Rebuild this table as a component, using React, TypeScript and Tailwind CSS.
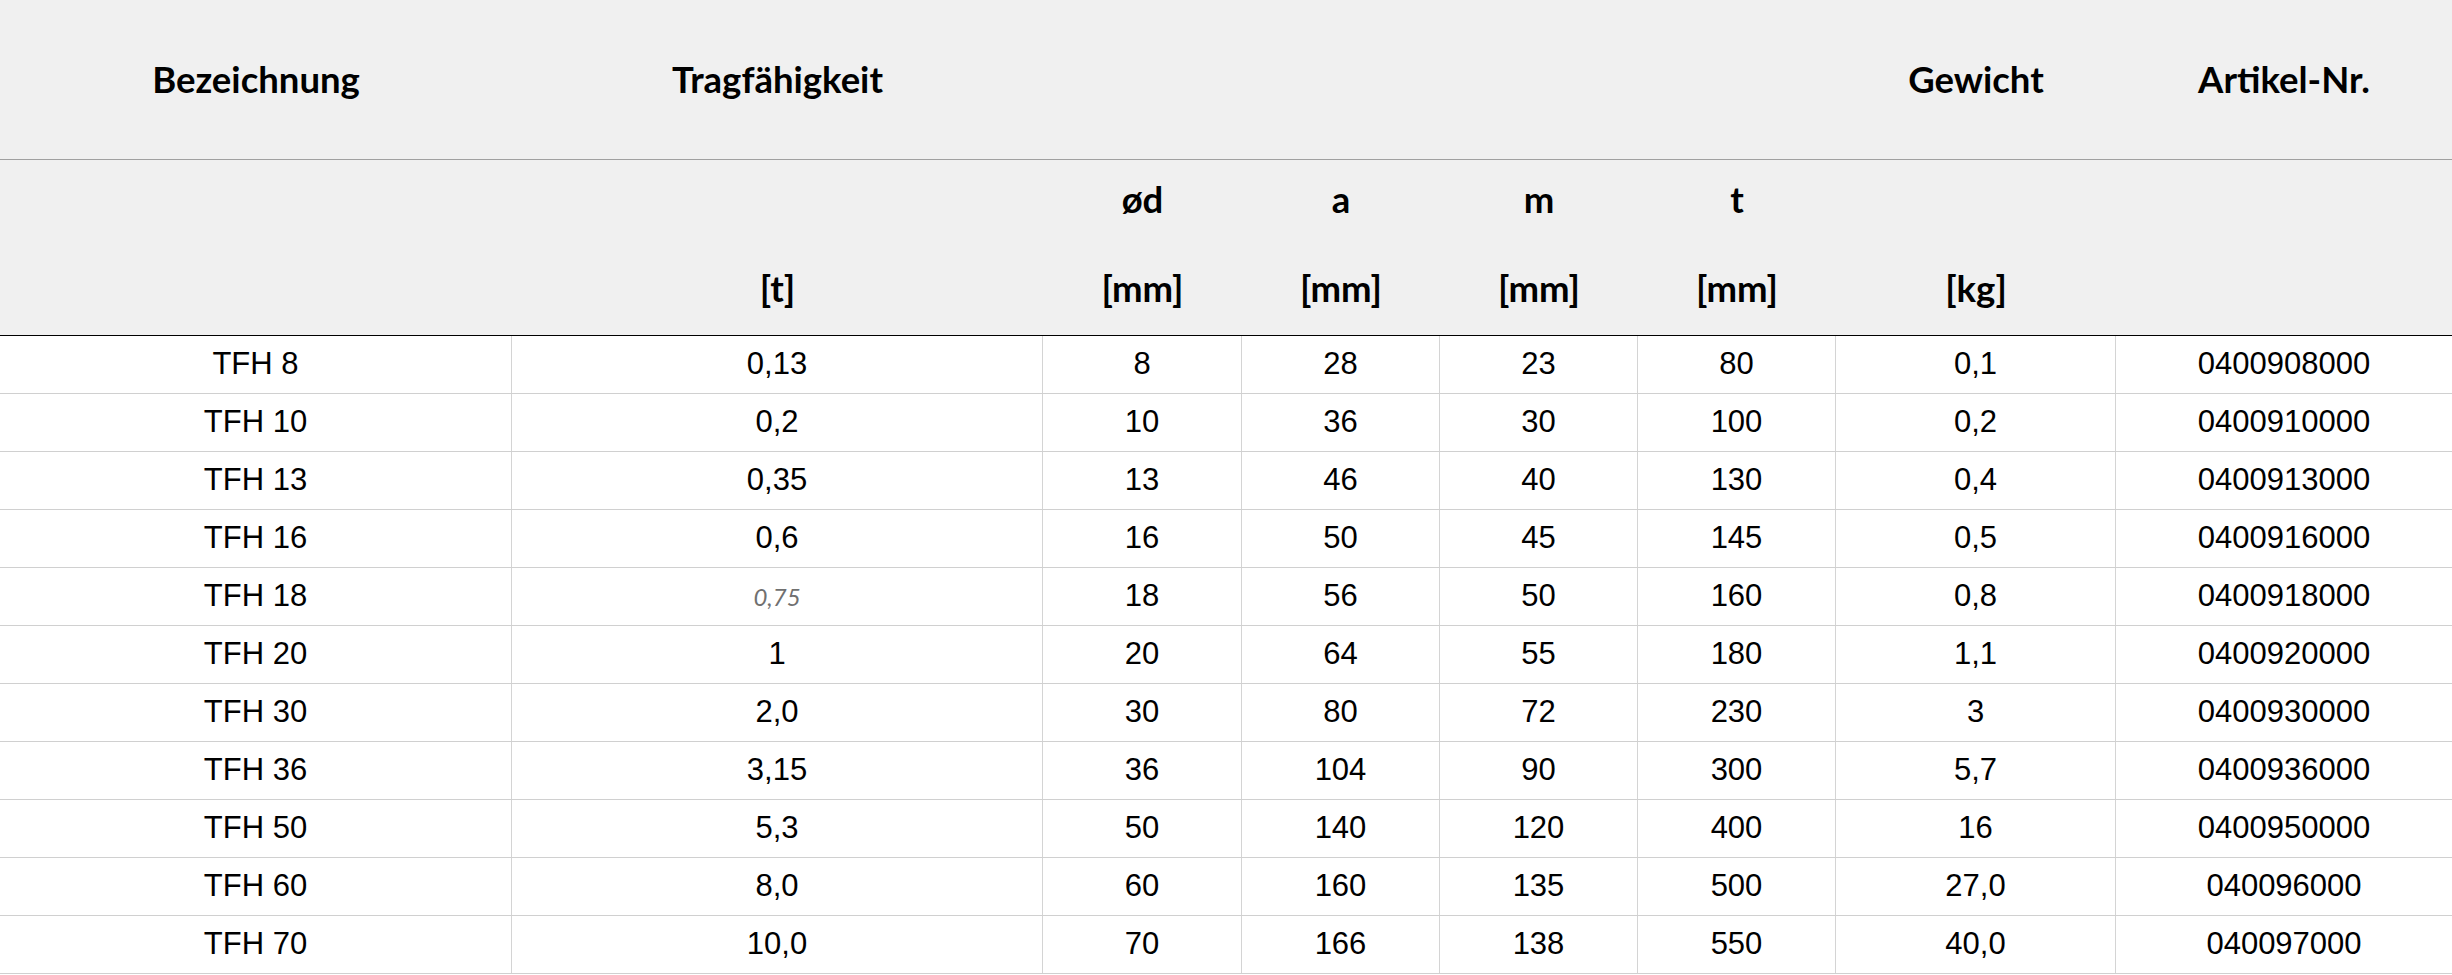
const cols = "grid grid-cols-[512px_531px_199px_198px_198px_198px_280px_336px]";

const rows: { name: string; load: string; d: string; a: string; m: string; t: string; kg: string; art: string; muted?: boolean }[] = [
  { name: "TFH 8", load: "0,13", d: "8", a: "28", m: "23", t: "80", kg: "0,1", art: "0400908000" },
  { name: "TFH 10", load: "0,2", d: "10", a: "36", m: "30", t: "100", kg: "0,2", art: "0400910000" },
  { name: "TFH 13", load: "0,35", d: "13", a: "46", m: "40", t: "130", kg: "0,4", art: "0400913000" },
  { name: "TFH 16", load: "0,6", d: "16", a: "50", m: "45", t: "145", kg: "0,5", art: "0400916000" },
  { name: "TFH 18", load: "0,75", d: "18", a: "56", m: "50", t: "160", kg: "0,8", art: "0400918000", muted: true },
  { name: "TFH 20", load: "1", d: "20", a: "64", m: "55", t: "180", kg: "1,1", art: "0400920000" },
  { name: "TFH 30", load: "2,0", d: "30", a: "80", m: "72", t: "230", kg: "3", art: "0400930000" },
  { name: "TFH 36", load: "3,15", d: "36", a: "104", m: "90", t: "300", kg: "5,7", art: "0400936000" },
  { name: "TFH 50", load: "5,3", d: "50", a: "140", m: "120", t: "400", kg: "16", art: "0400950000" },
  { name: "TFH 60", load: "8,0", d: "60", a: "160", m: "135", t: "500", kg: "27,0", art: "040096000" },
  { name: "TFH 70", load: "10,0", d: "70", a: "166", m: "138", t: "550", kg: "40,0", art: "040097000" },
];

// second header row: [top line, unit line]
const units: [string, string][] = [
  ["", ""],
  ["", "[t]"],
  ["ød", "[mm]"],
  ["a", "[mm]"],
  ["m", "[mm]"],
  ["t", "[mm]"],
  ["", "[kg]"],
  ["", ""],
];

const top = ["Bezeichnung", "Tragfähigkeit", "", "", "", "", "Gewicht", "Artikel-Nr."];

export default function App() {
  return (
    <div className="w-[2452px] bg-white text-black">
      {/* HEADER */}
      <div className="bg-[#f0f0f0] font-['Lato',sans-serif] text-[36.5px] font-bold">
        <div className={`${cols} h-[160px] border-b border-[#a0a0a0]`}>
          {top.map((label, i) => (
            <div key={i} className="flex items-center justify-center">
              {label}
            </div>
          ))}
        </div>
        <div className={`${cols} h-[176px] border-b border-black`}>
          {units.map(([sym, unit], i) => (
            <div key={i} className="flex flex-col items-center pt-[19px]">
              <div className="h-10 leading-10">{sym}</div>
              <div className="mt-[49px] h-10 leading-10">{unit}</div>
            </div>
          ))}
        </div>
      </div>

      {/* DATA */}
      <div className="font-['Liberation_Sans',Arial,sans-serif] text-[31px]">
        {rows.map((r) => (
          <div key={r.name} className={`${cols} h-[58px] border-b border-[#d0d0d0]`}>
            <div className="flex items-center justify-center border-r border-[#d4d4d4]">{r.name}</div>
            <div className="flex items-center justify-center border-r border-[#d4d4d4]">
              {r.muted ? (
                <span className="font-['Lato',sans-serif] text-[24px] italic text-[#707070]">{r.load}</span>
              ) : (
                r.load
              )}
            </div>
            <div className="flex items-center justify-center border-r border-[#d4d4d4]">{r.d}</div>
            <div className="flex items-center justify-center border-r border-[#d4d4d4]">{r.a}</div>
            <div className="flex items-center justify-center border-r border-[#d4d4d4]">{r.m}</div>
            <div className="flex items-center justify-center border-r border-[#d4d4d4]">{r.t}</div>
            <div className="flex items-center justify-center border-r border-[#d4d4d4]">{r.kg}</div>
            <div className="flex items-center justify-center">{r.art}</div>
          </div>
        ))}
      </div>
    </div>
  );
}
